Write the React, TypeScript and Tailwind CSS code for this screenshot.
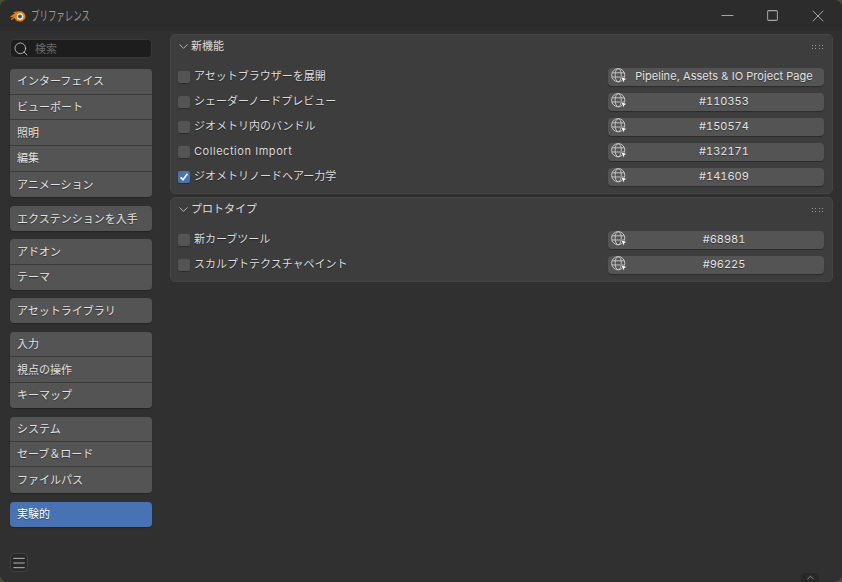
import React from "react";
import { ChevronDown, ChevronUp, Minus, Square, X, Search, Menu } from "lucide-react";

const FONT = { fontFamily: '"Inter", "Noto Sans CJK JP", sans-serif' };

/* ------------ Sidebar data ------------- */
const NAV_GROUPS: { items: string[]; active?: boolean; mt: string; rowH: string }[] = [
  { items: ["インターフェイス", "ビューポート", "照明", "編集", "アニメーション"], mt: "mt-[11px]", rowH: "h-[25.7px]" },
  { items: ["エクステンションを入手"], mt: "mt-[8.5px]", rowH: "h-[25.25px]" },
  { items: ["アドオン", "テーマ"], mt: "mt-[8.25px]", rowH: "h-[25.25px]" },
  { items: ["アセットライブラリ"], mt: "mt-[8px]", rowH: "h-[25.25px]" },
  { items: ["入力", "視点の操作", "キーマップ"], mt: "mt-[9px]", rowH: "h-[25.25px]" },
  { items: ["システム", "セーブ＆ロード", "ファイルパス"], mt: "mt-[9px]", rowH: "h-[25.25px]" },
  { items: ["実験的"], active: true, mt: "mt-[9px]", rowH: "h-[25.25px]" },
];

const FEATURES = [
  { label: "アセットブラウザーを展開", link: "Pipeline, Assets & IO Project Page" },
  { label: "シェーダーノードプレビュー", link: "#110353" },
  { label: "ジオメトリ内のバンドル", link: "#150574" },
  { label: "Collection Import", link: "#132171" },
  { label: "ジオメトリノードヘアー力学", link: "#141609", checked: true },
];

const PROTOTYPES = [
  { label: "新カーブツール", link: "#68981" },
  { label: "スカルプトテクスチャペイント", link: "#96225" },
];

function LogoIcon() {
  return (
    <svg width="16" height="13" viewBox="0 0 16 13" className="shrink-0">
      <path d="M0.5 7.2 L5 4.2 L3 3 L8 2.6 C11.5 1.6 15 3.6 15.5 7 C15.8 10 13 12.6 9.8 12.6 C7 12.6 4.8 11 4.6 8.8 L2 10.8 C1.2 11.2 0.6 10.4 1.2 9.8 L3.8 7.6 L1.2 8.2 C0.4 8.2 0.2 7.6 0.5 7.2 Z" fill="#e87d0d" />
      <circle cx="10" cy="7.5" r="3.2" fill="#ffffff" />
      <circle cx="10" cy="7.5" r="2" fill="#265787" />
    </svg>
  );
}

function GlobeCursor() {
  return (
    <svg width="17" height="16" viewBox="0 0 17 16" className="shrink-0" fill="none">
      <g stroke="#c4c4c4" strokeWidth="1">
        <circle cx="7.2" cy="7.2" r="6.6" />
        <ellipse cx="7.2" cy="7.2" rx="3.1" ry="6.6" />
        <path d="M1 4.8 H13.4 M0.8 9 H13.6" />
      </g>
      <path d="M9.6 8.6 L16.2 11 L13.6 12.1 L12.8 15.2 Z" fill="#ffffff" stroke="#444444" strokeWidth="0.6" />
    </svg>
  );
}

function NavGroup({ items, active, mt, rowH }: { items: string[]; active?: boolean; mt: string; rowH: string }) {
  return (
    <div className={`${mt} rounded-[4px] overflow-hidden shadow-[0_1px_1px_rgba(0,0,0,0.25)] divide-y divide-[#3a3a3a]`}>
      {items.map((t) => (
        <div
          key={t}
          className={`${rowH} pl-[7px] pt-[1px] flex items-center text-[11px] leading-none [text-shadow:0_1px_1px_rgba(0,0,0,0.4)] ${active ? "bg-[#4772b3] text-white" : "bg-[#545454] text-[#e2e2e2]"}`}
        >
          {t}
        </div>
      ))}
    </div>
  );
}

function Row({ label, link, checked }: { label: string; link: string; checked?: boolean }) {
  const latin = label === "Collection Import";
  const hash = link.startsWith("#");
  return (
    <div className="h-[25px] flex items-center pl-[7px] pr-2">
      <div className={`w-[12px] h-[12px] rounded-[2px] flex items-center justify-center shrink-0 shadow-[0_1px_1px_rgba(0,0,0,0.3)] ${checked ? "bg-[#4772b3]" : "bg-[#545454]"}`}>
        {checked && (
          <svg width="10" height="10" viewBox="0 0 10 10" fill="none">
            <path d="M1.6 5.4 L4 7.8 L8.4 1.8" stroke="#ffffff" strokeWidth="1.7" />
          </svg>
        )}
      </div>
      <span className={`ml-[4px] text-[11px] text-[#dcdcdc] leading-none [text-shadow:0_1px_1px_rgba(0,0,0,0.4)] ${latin ? "tracking-[0.55px]" : ""}`}>{label}</span>
      <div className="ml-auto w-[216px] h-[18px] rounded-[4px] bg-[#545454] flex items-center pr-[4px] shadow-[0_1px_1px_rgba(0,0,0,0.3)]">
        <div className="w-[20px] pl-[3px] -mt-[2px]">
          <GlobeCursor />
        </div>
        <span className={`flex-1 text-center text-[11px] text-[#e2e2e2] leading-none [text-shadow:0_1px_1px_rgba(0,0,0,0.4)] ${hash ? "tabular-nums" : "tracking-[0.05px]"}`}>{link}</span>
      </div>
    </div>
  );
}

function Panel({ title, rows, className }: { title: string; rows: typeof FEATURES; className: string }) {
  return (
    <div className={`rounded-[5px] bg-[#3d3d3d] border border-[#454545] pb-[5px] ${className}`}>
      <div className="h-[23px] flex items-center pl-[5px] pr-[9px]">
        <ChevronDown size={15} strokeWidth={1.3} className="text-[#cccccc]" />
        <span className="text-[11px] text-[#dcdcdc] leading-none">{title}</span>
        <div className="ml-auto grid grid-cols-4 gap-x-[2.4px] gap-y-[2px]">
          {Array.from({ length: 8 }).map((_, i) => (
            <div key={i} className="w-[1px] h-[1px] bg-[#9a9a9a]" />
          ))}
        </div>
      </div>
      <div className="mt-[6px]">
        {rows.map((r) => (
          <Row key={r.label} {...r} />
        ))}
      </div>
    </div>
  );
}

export default function App() {
  return (
    <div className="w-[842px] h-[582px] bg-[#4a4c34] overflow-hidden" style={FONT}>
      <div className="relative w-full h-full rounded-lg bg-[#303030] flex flex-col overflow-hidden">
        <div className="h-[31px] bg-[#2c2c2c] flex items-center pl-[10px] shrink-0">
          <LogoIcon />
          <span className="ml-[5px] text-[13px] text-[#9a9a9a] leading-none origin-left scale-x-[0.65]">プリファレンス</span>
          <div className="ml-auto flex items-center pr-[2px] text-[#a6a6a6]">
            <div className="w-[45px] flex justify-center"><Minus size={19} strokeWidth={1.26} /></div>
            <div className="w-[45px] flex justify-center"><Square size={13} strokeWidth={1.85} /></div>
            <div className="w-[45px] flex justify-center"><X size={20} strokeWidth={1.2} /></div>
          </div>
        </div>
        <div className="flex flex-1 min-h-0">
          <div className="w-[170px] shrink-0 pl-[10px] pr-[18px] pt-[8px] flex flex-col">
            <div className="h-[19px] rounded-[4px] bg-[#1d1d1d] border border-[#383838] flex items-center pl-[2px]">
              <Search size={16} strokeWidth={1.2} className="text-[#d0d0d0]" />
              <span className="ml-[6px] pt-[1px] text-[11px] text-[#6a6a6a] leading-none">検索</span>
            </div>
            {NAV_GROUPS.map((g) => (
              <NavGroup key={g.items[0]} {...g} />
            ))}
            <div className="mt-auto mb-[10px] w-[18px] h-[19px] rounded-[4px] bg-[#282828] border border-[#414141] flex items-center justify-center">
              <Menu size={18} strokeWidth={1.33} className="text-[#c8c8c8]" />
            </div>
          </div>
          <div className="flex-1 min-w-0 pr-[9px] pt-[3px]">
            <Panel title="新機能" rows={FEATURES} className="h-[160px]" />
            <Panel title="プロトタイプ" rows={PROTOTYPES} className="h-[85px] mt-[3px]" />
          </div>
        </div>
        <div className="absolute right-[23px] bottom-0 w-[18px] h-[9px] rounded-t-[4px] bg-[#282828] flex items-center justify-center">
          <ChevronUp size={11} strokeWidth={1.8} className="text-[#a8a8a8]" />
        </div>
      </div>
    </div>
  );
}
